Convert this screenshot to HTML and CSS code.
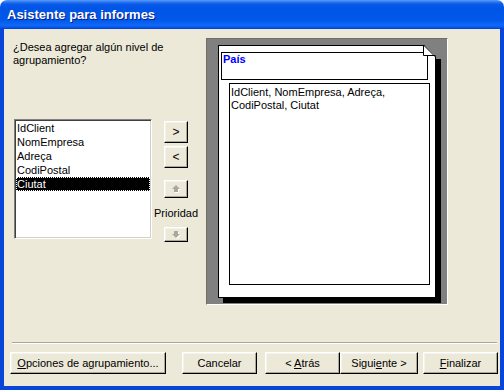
FILE: index.html
```html
<!DOCTYPE html>
<html lang="es">
<head>
    <meta charset="UTF-8">
    <title>Asistente para informes</title>
    <link rel="stylesheet" href="styles.css">
</head>
<body>
    <div class="window">
        <div class="titlebar">
            <span class="title">Asistente para informes</span>
        </div>
        <div class="frame">
            <div class="main">
                <div class="left">
                    <p class="question">¿Desea agregar algún nivel de<br>agrupamiento?</p>
                    <ul class="listbox">
                        <li>IdClient</li>
                        <li>NomEmpresa</li>
                        <li>Adreça</li>
                        <li>CodiPostal</li>
                        <li class="selected">Ciutat</li>
                    </ul>
                </div>
                <div class="mid">
                    <button class="btn move">&gt;</button>
                    <button class="btn move">&lt;</button>
                    <button class="btn arrow up" disabled>
                        <svg width="9" height="8" viewBox="0 0 9 8">
                            <path d="M5 1 L9 5 H7 V8 H3 V5 H1 Z" fill="#fff"/>
                            <path d="M4 0 L8 4 H6 V7 H2 V4 H0 Z" fill="#aca899"/>
                        </svg>
                    </button>
                    <span class="priority">Prioridad</span>
                    <button class="btn arrow down" disabled>
                        <svg width="9" height="8" viewBox="0 0 9 8">
                            <path d="M3 1 H7 V4 H9 L5 8 L1 4 H3 Z" fill="#fff"/>
                            <path d="M2 0 H6 V3 H8 L4 7 L0 3 H2 Z" fill="#aca899"/>
                        </svg>
                    </button>
                </div>
                <div class="preview">
                    <div class="page">
                        <svg class="fold" width="19" height="14" viewBox="0 0 19 14">
                            <polygon points="2,0 19,0 19,14 14,14 14,12" fill="#808080"/>
                            <polygon points="1.5,0.5 1.5,10.5 13,10.5" fill="#fff"/>
                            <path d="M1.5 0 V10.5 H13.5 M1.5 0 L13.5 12 V14" stroke="#000" fill="none"/>
                        </svg>
                        <div class="group-header">País</div>
                        <div class="detail">IdClient, NomEmpresa, Adreça,<br>CodiPostal, Ciutat</div>
                    </div>
                </div>
            </div>
            <div class="separator"></div>
            <div class="footer">
                <button class="btn options"><u>O</u>pciones de agrupamiento...</button>
                <button class="btn cancel">Cancelar</button>
                <button class="btn back">&lt; <u>A</u>trás</button>
                <button class="btn next">Sigui<u>e</u>nte &gt;</button>
                <button class="btn finish"><u>F</u>inalizar</button>
            </div>
        </div>
    </div>
</body>
</html>
```

FILE: styles.css
```css
body {
    margin: 0;
    background-color: #fff;
    font-family: "Liberation Sans", Arial, sans-serif;
    font-size: 11px;
    color: #000;
}
.window {
    width: 504px;
    height: 390px;
    display: flex;
    flex-direction: column;
}
.titlebar {
    height: 29px;
    box-sizing: border-box;
    padding: 7px 0 0 7px;
    border-radius: 7px 7px 0 0;
    background: linear-gradient(#5a9cf8 0px, #2d78f3 2px, #0a5ae8 4px, #0055e5 8px, #0058ea 20px, #1068f6 25px, #0a5cf0 27px, #003dd2 29px);
}
.title {
    color: #fff;
    font-weight: bold;
    font-size: 13px;
    line-height: 15px;
    text-shadow: 1px 1px 0 #0a1c8a;
}
.frame {
    flex: 1;
    background-color: #ece9d8;
    border: 4px solid #0845d9;
    border-top: 0;
    display: flex;
    flex-direction: column;
}
.main {
    display: flex;
    padding: 9px 0 0 9px;
}
.left {
    width: 141px;
}
.question {
    margin: 3px 0 0;
    line-height: 13px;
    white-space: nowrap;
}
.listbox {
    list-style: none;
    margin: 52px 0 0 1px;
    width: 138px;
    height: 120px;
    box-sizing: border-box;
    background-color: #fff;
    border: 1px solid;
    border-color: #808080 #fff #fff #808080;
    box-shadow: inset 1px 1px 0 #404040, inset -1px -1px 0 #d4d0c8;
    padding: 1px;
}
.listbox li {
    line-height: 14px;
    padding-left: 1px;
}
.listbox .selected {
    background-color: #000;
    color: #fff;
    outline: 1px dotted #fff;
    outline-offset: -1px;
}
.mid {
    width: 44px;
    display: flex;
    flex-direction: column;
    align-items: center;
    padding-top: 83px;
}
.btn {
    font-family: "Liberation Sans", Arial, sans-serif;
    font-size: 11px;
    color: #000;
    background-color: #ece9d8;
    border: 1px solid;
    border-color: #fff #000 #000 #fff;
    box-shadow: inset -1px -1px 0 #aca899, inset 1px 1px 0 #f5f4ec;
    padding: 0;
    margin: 0;
    box-sizing: border-box;
    height: 22px;
}
.btn u {
    text-decoration: underline;
}
.move {
    width: 24px;
    margin-bottom: 3px;
    font-size: 12px;
}
.arrow {
    width: 24px;
    display: flex;
    align-items: center;
    justify-content: center;
}
.arrow.up {
    height: 18px;
    margin-top: 9px;
}
.arrow.down {
    height: 15px;
}
.priority {
    margin: 9px 0 7px;
    line-height: 13px;
}
.preview {
    margin-left: 8px;
    width: 242px;
    height: 267px;
    box-sizing: border-box;
    border: 1px solid;
    border-color: #716f64 #fff #fff #716f64;
    background-color: #808080;
    padding: 6px 0 0 11px;
}
.page {
    position: relative;
    width: 218px;
    height: 253px;
    box-sizing: border-box;
    background-color: #fff;
    border: 1px solid #000;
    box-shadow: 5px 5px 0 #000;
    padding: 6px 0 0 2px;
}
.fold {
    position: absolute;
    top: -1px;
    left: 203px;
}
.group-header {
    width: 207px;
    height: 28px;
    box-sizing: border-box;
    border: 1px solid #000;
    color: #0000ff;
    font-weight: bold;
    line-height: 13px;
    padding: 0 0 0 1px;
}
.detail {
    margin: 3px 0 0 8px;
    width: 201px;
    height: 202px;
    box-sizing: border-box;
    border: 1px solid #000;
    line-height: 13px;
    padding: 2px 1px;
}
.separator {
    margin: 37px 3px 0 8px;
    border-top: 1px solid #aca899;
    border-bottom: 1px solid #fff;
}
.footer {
    display: flex;
    padding: 8px 0 0 6px;
}
.options {
    width: 156px;
}
.cancel {
    width: 75px;
    margin-left: 16px;
}
.back {
    width: 75px;
    margin-left: 8px;
}
.next {
    width: 78px;
}
.finish {
    width: 75px;
    margin-left: 5px;
}
```
